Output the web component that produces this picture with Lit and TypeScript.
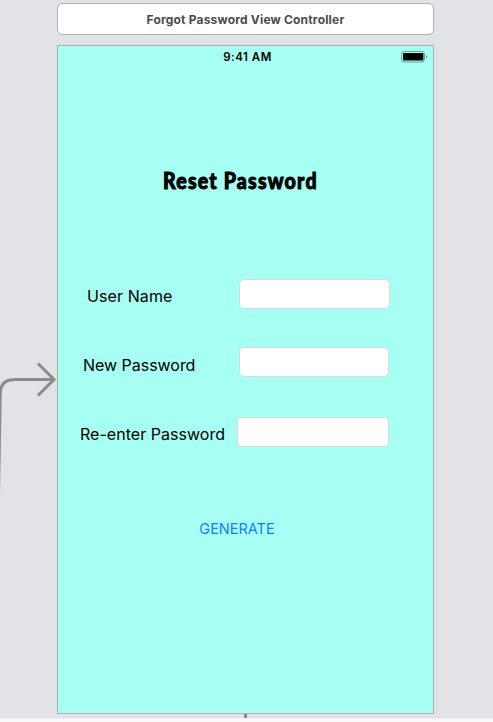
import { LitElement, html, css } from "lit";
import { customElement, property } from "lit/decorators.js";

@customElement("status-bar")
class StatusBar extends LitElement {
  static styles = css`
    :host { display: grid; grid-template-columns: 1fr auto 1fr; height: 22px; align-items: center; }
    .time { grid-column: 2; font: 600 11.5px/22px Inter, sans-serif; letter-spacing: 0.5px; color: #000; margin-left: 4px; }
    .battery { justify-self: end; display: block; margin: -1px 5px 0 0; }
  `;
  render() {
    return html`
      <span class="time">9:41 AM</span>
      <svg class="battery" width="28" height="12" viewBox="0 0 28 12">
        <rect x="1.5" y="0.5" width="23" height="10.5" rx="2.8" fill="none" stroke="#5fa198" stroke-width="1" />
        <rect x="3" y="2" width="20.4" height="7.6" rx="0.8" fill="#000" />
        <path d="M26 4 Q28.4 5.8 26 7.6 Z" fill="#568f87" />
      </svg>
    `;
  }
}

@customElement("form-row")
class FormRow extends LitElement {
  @property() label = "";
  static styles = css`
    :host { display: flex; justify-content: space-between; align-items: center; height: 30px; }
    .label { font: 400 16px/30px Inter, sans-serif; white-space: nowrap; color: #000; padding-top: var(--label-drop, 4px); letter-spacing: var(--track, 0); }
    .field { box-sizing: border-box; width: var(--field-width, 150px); height: 30px; margin: 0; padding: 0 7px; border: 1px solid #d3dedc; border-radius: 5px; background: #fff; outline: none; font: 14px Inter, sans-serif; }
  `;
  render() {
    return html`<label class="label" for="f">${this.label}</label><input id="f" class="field" />`;
  }
}

@customElement("app-root")
class AppRoot extends LitElement {
  static styles = css`
    :host { display: block; position: relative; box-sizing: border-box; width: 493px; height: 722px; overflow: hidden; background: linear-gradient(#e2e3e7 0 718px, #ededf0 718px 719px, #fafafa 719px); padding: 3px 59px 0 57px; }
    .header { box-sizing: border-box; height: 32px; border: 1px solid #b0b0b2; border-radius: 5px; background: #fff; text-align: center; font: 700 12px/31px Inter, sans-serif; letter-spacing: 0.19px; color: #4b4b4b; white-space: nowrap; }
    .screen { box-sizing: border-box; height: 669px; margin-top: 10px; border: 1px solid #a9b1b1; background: #a7fff3; display: flex; flex-direction: column; }
    .title { margin: 96px 0 1px; padding-right: 12px; height: 32px; text-align: center; font: 900 23px/32px Lato, sans-serif; letter-spacing: 1.4px; color: #000; -webkit-text-stroke: 1px #000; white-space: nowrap; transform: scaleX(0.85); }
    .form { display: flex; flex-direction: column; margin-top: 82px; }
    .user { margin: 0 43px 0 29px; --field-width: 151px; --track: 0.1px; }
    .new { margin: 38px 44px 0 25px; --label-drop: 6px; --track: -0.03px; }
    .again { margin: 40px 44px 0 22px; --field-width: 152px; --track: 0.03px; }
    .generate { align-self: center; margin: 67px 17px 0 0; padding: 0; border: 0; background: none; height: 30px; font: 400 14.5px/30px Inter, sans-serif; color: #117dff; white-space: nowrap; }
    .segue { position: absolute; left: 0; top: 350px; }
    .outlet { position: absolute; left: 244px; top: 714px; width: 3px; height: 4px; background: #8b8b8d; }
  `;
  render() {
    return html`
      <div class="header">Forgot Password View Controller</div>
      <main class="screen">
        <status-bar></status-bar>
        <h1 class="title">Reset Password</h1>
        <div class="form">
          <form-row class="user" label="User Name"></form-row>
          <form-row class="new" label="New Password"></form-row>
          <form-row class="again" label="Re-enter Password"></form-row>
        </div>
        <button class="generate">GENERATE</button>
      </main>
      <svg class="segue" width="57" height="150" viewBox="0 0 57 150" fill="none" stroke="#8b8b8b" stroke-width="3">
        <path d="M54 29.5H15Q.5 29.5 .3 43L-1.5 144" />
        <path d="M38 13.5L54 29.5L38 45.5" stroke-linejoin="miter" />
      </svg>
      <div class="outlet"></div>
    `;
  }
}
